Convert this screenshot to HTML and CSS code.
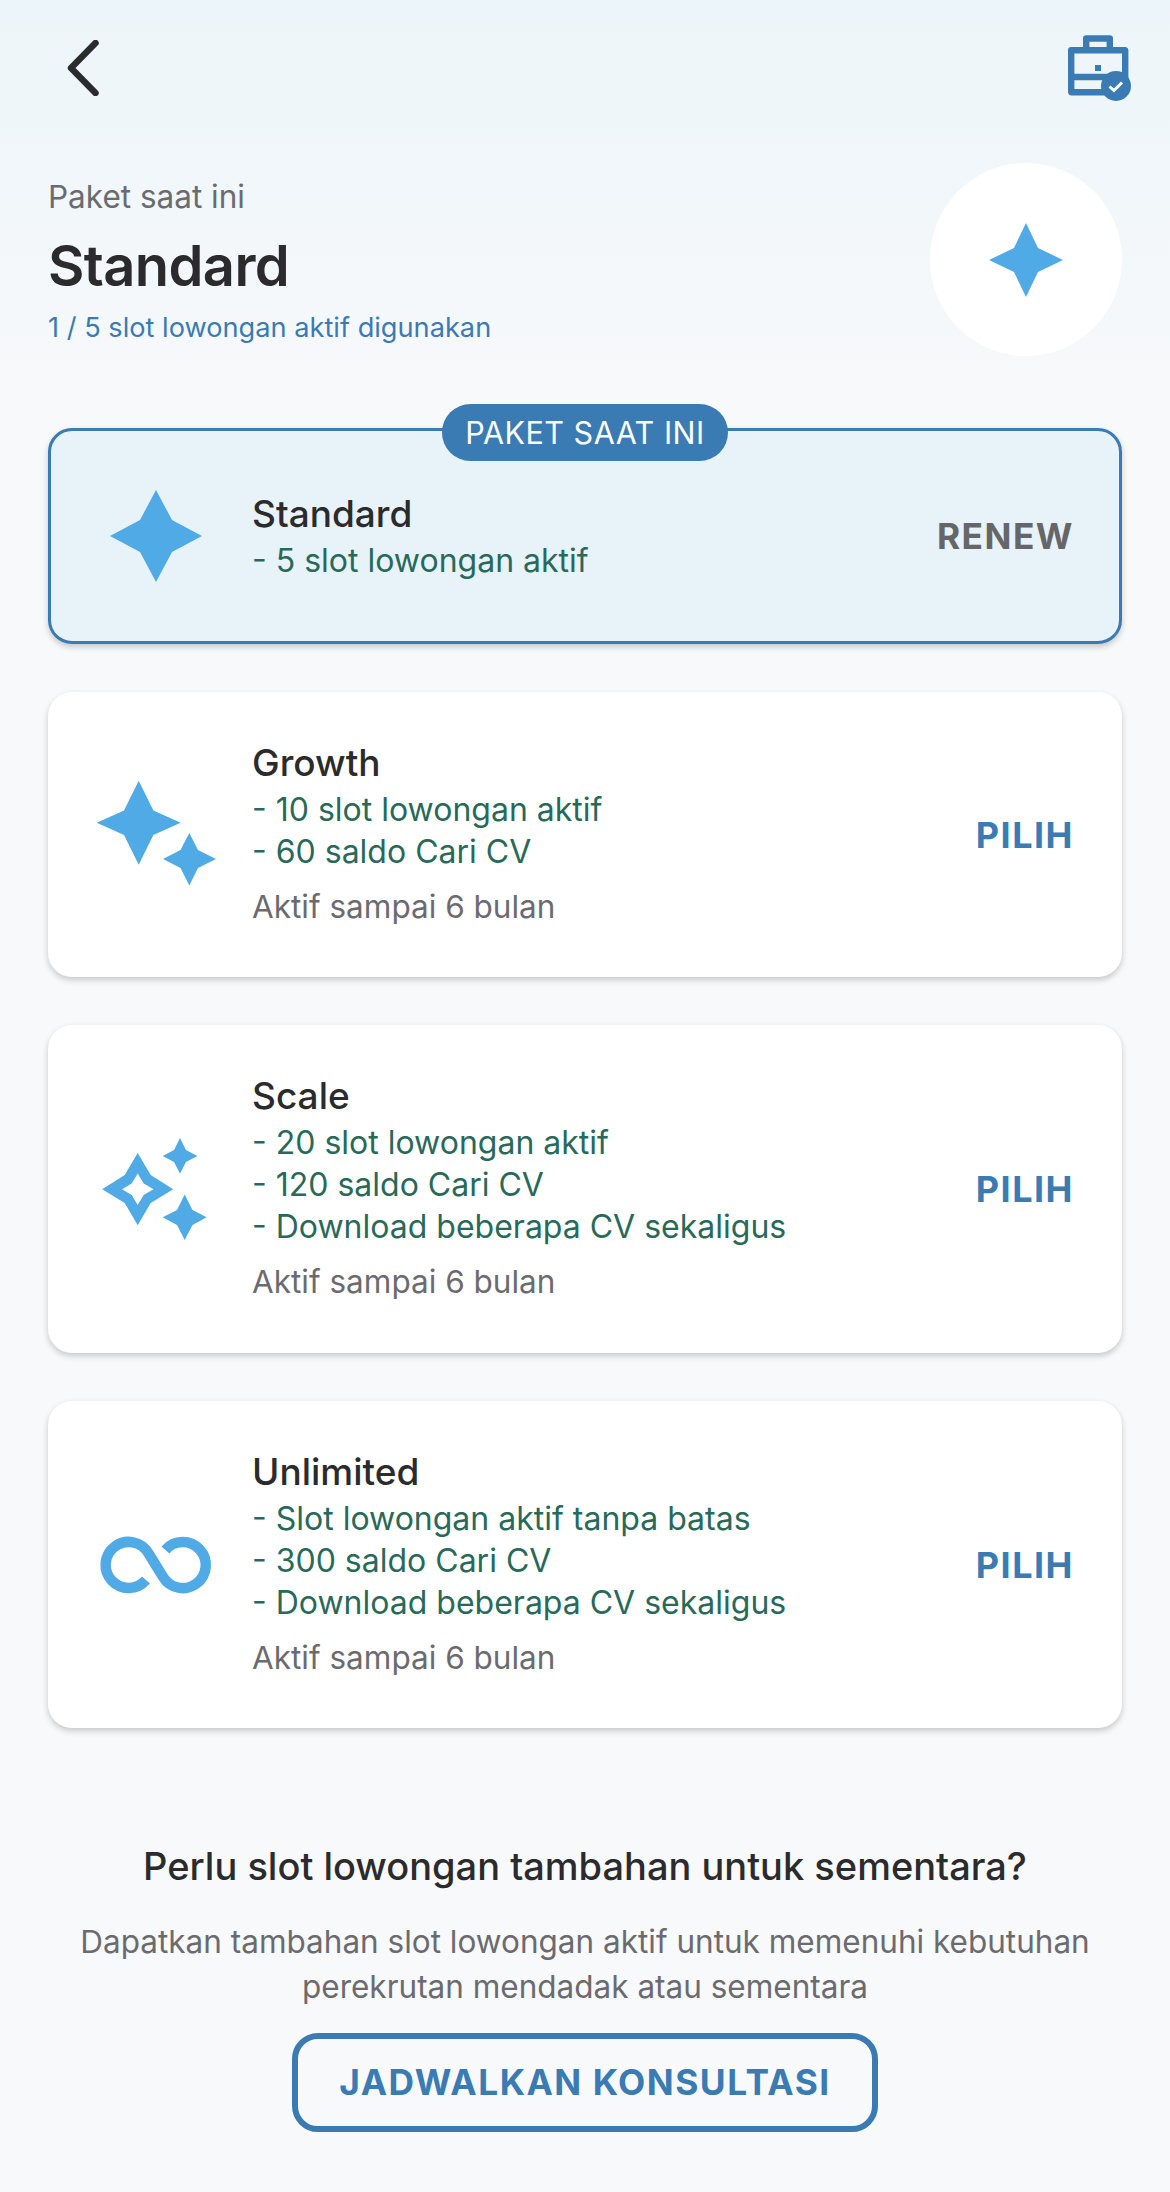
FILE: index.html
```html
<!DOCTYPE html>
<html lang="id">
<head>
<meta charset="utf-8">
<title>Paket</title>
<link rel="stylesheet" href="styles.css">
</head>
<body>
<div class="page">
  <header class="topbar">
    <svg class="back" viewBox="0 0 32 56"><path d="M28.5 3 L4 28 L28.5 53"/></svg>
    <svg class="case" viewBox="0 0 63 66">
      <path class="case-line" d="M3.2 15.2H56.8a.4.4 0 0 1 .4.4V56.8a.4.4 0 0 1-.4.4H3.6a.4.4 0 0 1-.4-.4V15.6a.4.4 0 0 1 .4-.4Z"/>
      <path class="case-line" d="M18.2 12V3.5H41.8V12"/>
      <path class="case-line" d="M3 42H57"/>
      <rect class="case-fill" x="27" y="30" width="6" height="6"/>
      <circle class="case-fill" cx="48" cy="51" r="15"/>
      <path class="case-check" d="M41.5 51.5l4.5 4 8-8"/>
    </svg>
  </header>

  <section class="summary">
    <div class="summary-text">
      <div class="summary-label">Paket saat ini</div>
      <h1 class="summary-name">Standard</h1>
      <div class="summary-usage">1 / 5 slot lowongan aktif digunakan</div>
    </div>
    <div class="summary-badge">
      <svg class="summary-star" viewBox="0 0 74 74"><polygon points="37,0 49,25 74,37 49,49 37,74 25,49 0,37 25,25"/></svg>
    </div>
  </section>

  <section class="plans">
    <article class="card card-current">
      <div class="ribbon">PAKET SAAT INI</div>
      <svg class="plan-icon" viewBox="0 0 160 120"><polygon points="80,14 96,44 126,60 96,76 80,106 64,76 34,60 64,44"/></svg>
      <div class="plan-text">
        <h2 class="plan-name">Standard</h2>
        <ul class="plan-items"><li>- 5 slot lowongan aktif</li></ul>
      </div>
      <span class="plan-action action-muted">RENEW</span>
    </article>

    <article class="card">
      <svg class="plan-icon" viewBox="0 0 160 120"><polygon points="62.7,5.8 77.4,35.6 104.7,47.8 77.4,60 62.7,89.8 48,60 20.7,47.8 48,35.6"/><polygon points="113.3,58 122,75 140,84 122,93 113.3,110.5 104.5,93 87,84 104.5,75"/></svg>
      <div class="plan-text">
        <h2 class="plan-name">Growth</h2>
        <ul class="plan-items"><li>- 10 slot lowongan aktif</li><li>- 60 saldo Cari CV</li></ul>
        <p class="plan-note">Aktif sampai 6 bulan</p>
      </div>
      <span class="plan-action">PILIH</span>
    </article>

    <article class="card card-tall">
      <svg class="plan-icon" viewBox="0 0 160 120"><path fill-rule="evenodd" d="M61.7 24 L74.7 46 L97.2 60.3 L74.7 74 L61.7 96.3 L48.7 74 L26.2 60.3 L48.7 46 Z M61.7 44.5 L55.7 54.5 L46 60.3 L55.7 66 L61.7 76 L67.7 66 L77.5 60.3 L67.7 54.5 Z"/><polygon points="104,9 110,21 121.5,27 110,33 104,44.8 98,33 86.7,27 98,21"/><polygon points="108.7,65.5 116.5,81 130.7,88.3 116.5,96 108.7,111 101,96 86.7,88.3 101,81"/></svg>
      <div class="plan-text">
        <h2 class="plan-name">Scale</h2>
        <ul class="plan-items"><li>- 20 slot lowongan aktif</li><li>- 120 saldo Cari CV</li><li>- Download beberapa CV sekaligus</li></ul>
        <p class="plan-note">Aktif sampai 6 bulan</p>
      </div>
      <span class="plan-action">PILIH</span>
    </article>

    <article class="card card-tall">
      <svg class="plan-icon" viewBox="0 0 160 120"><path class="loop" d="M70 75 A23 23 0 1 1 72.3 48 L87.1 72 A23 23 0 1 0 89.4 45"/></svg>
      <div class="plan-text">
        <h2 class="plan-name">Unlimited</h2>
        <ul class="plan-items"><li>- Slot lowongan aktif tanpa batas</li><li>- 300 saldo Cari CV</li><li>- Download beberapa CV sekaligus</li></ul>
        <p class="plan-note">Aktif sampai 6 bulan</p>
      </div>
      <span class="plan-action">PILIH</span>
    </article>
  </section>

  <section class="extra">
    <h3 class="extra-title">Perlu slot lowongan tambahan untuk sementara?</h3>
    <p class="extra-text">Dapatkan tambahan slot lowongan aktif untuk memenuhi kebutuhan perekrutan mendadak atau sementara</p>
    <a class="extra-button">JADWALKAN KONSULTASI</a>
  </section>
</div>
</body>
</html>
```

FILE: styles.css
```css
* { box-sizing: border-box; margin: 0; padding: 0; }
html, body { width: 1170px; height: 2192px; overflow: hidden; }
body { font-family: Inter, "Liberation Sans", sans-serif; background: #f8f9fb; }

.page {
  display: flex;
  flex-direction: column;
  height: 2192px;
  background: linear-gradient(180deg, #ecf5f9 0, #f8f9fb 420px);
}

.topbar {
  display: flex;
  align-items: center;
  justify-content: space-between;
  height: 66px;
  margin-top: 35px;
  padding: 0 39px 0 67px;
}
.back { width: 32px; height: 56px; fill: none; stroke: #2b2b2d; stroke-width: 6.5; stroke-linecap: round; stroke-linejoin: round; }
.case { width: 63px; height: 66px; }
.case-line { fill: none; stroke: #3a7bb3; stroke-width: 6.4; stroke-linejoin: round; }
.case-fill { fill: #3a7bb3; }
.case-check { fill: none; stroke: #fff; stroke-width: 3; }

.summary {
  display: flex;
  justify-content: space-between;
  height: 193px;
  margin-top: 62px;
  padding: 0 48px;
}
.summary-text { padding-top: 14px; }
.summary-label { font-size: 31.5px; line-height: 40px; color: #6b6b6f; }
.summary-name { font-size: 56px; line-height: 64px; font-weight: 600; color: #2b2b2d; margin-top: 17px; letter-spacing: -0.6px; }
.summary-usage { font-size: 27.2px; line-height: 36px; color: #3a7bb3; margin-top: 12px; }
.summary-badge {
  display: flex;
  align-items: center;
  justify-content: center;
  width: 192px;
  height: 193px;
  border-radius: 50%;
  background: #fff;
}
.summary-star { width: 74px; height: 74px; fill: #4faae6; }

.plans {
  display: flex;
  flex-direction: column;
  gap: 48px;
  margin-top: 72px;
  padding: 0 48px;
}
.card {
  position: relative;
  display: flex;
  align-items: center;
  min-height: 285px;
  padding: 50px 48px 49px 28px;
  background: #fff;
  border-radius: 24px;
  box-shadow: 0 3px 6px rgba(0, 0, 0, 0.2);
}
.card-tall { min-height: 327.5px; }
.card-current {
  min-height: 216px;
  padding: 0 45px 0 25px;
  background: #e7f2f9;
  border: 3px solid #3a7bb3;
}
.card-current .plan-text { padding-top: 3px; }
.ribbon {
  position: absolute;
  top: -27px;
  left: 50%;
  transform: translateX(-50%);
  width: 286px;
  height: 57px;
  border-radius: 29px;
  background: #3a7bb3;
  color: #fff;
  font-size: 30.5px;
  line-height: 57px;
  text-align: center;
  letter-spacing: 0.5px;
}
.plan-icon { flex: none; width: 160px; height: 120px; fill: #4faae6; margin-right: 16px; overflow: visible; }
.loop { fill: none; stroke: #4faae6; stroke-width: 10.5; }
.plan-text { flex: 1; }
.plan-name { font-size: 37px; line-height: 42px; font-weight: 500; color: #2b2b2d; }
.plan-items { list-style: none; margin-top: 5px; font-size: 32px; line-height: 42px; color: #28695a; }
.plan-note { margin-top: 13px; font-size: 31.5px; line-height: 42px; color: #6b6b6f; }
.plan-action { font-size: 36px; font-weight: 700; color: #3a7bb3; letter-spacing: 1.5px; }
.action-muted { color: #666669; font-size: 35.3px; }

.extra {
  display: flex;
  flex-direction: column;
  align-items: center;
  margin-top: 114px;
  padding: 0 60px;
  text-align: center;
}
.extra-title { font-size: 38px; line-height: 48px; font-weight: 500; color: #2b2b2d; white-space: nowrap; }
.extra-text { margin-top: 29px; font-size: 31.5px; line-height: 45px; color: #6b6b6f; width: 1040px; }
.extra-button {
  display: flex;
  align-items: center;
  justify-content: center;
  width: 586px;
  height: 99px;
  margin-top: 24px;
  border: 6px solid #3a7bb3;
  border-radius: 26px;
  color: #3a7bb3;
  font-size: 35.3px;
  font-weight: 700;
  letter-spacing: 1.5px;
}
```
